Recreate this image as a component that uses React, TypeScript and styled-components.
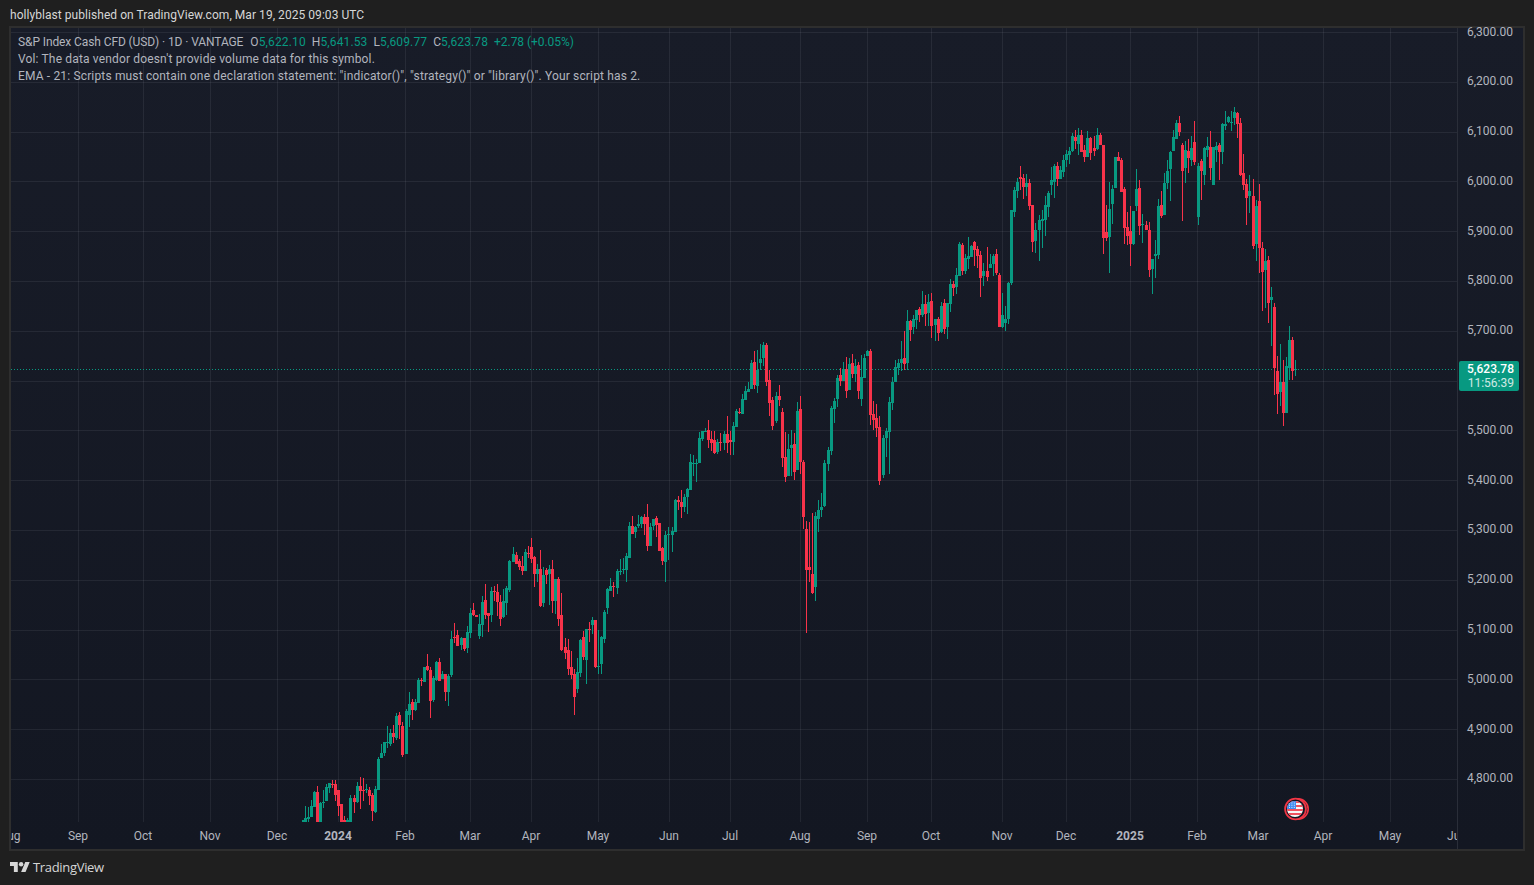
import React from "react";
import styled, { createGlobalStyle } from "styled-components";

type Bar = [number, number, number, number, number?, number?];
type Candle = { x: number; up: boolean; top: number; bottom: number; high: number; low: number };

const seg = (ox: number, oy: number, bars: Bar[]): Candle[] =>
  bars.map(([zx, k, t, b, h, l]) => ({
    x: Math.round(ox + zx / 3),
    up: k === 1,
    top: oy + t / 3,
    bottom: oy + b / 3,
    high: oy + (h ?? t) / 3,
    low: oy + (l ?? b) / 3,
  }));

const PANE_BOTTOM = 822;

const candles: Candle[] = [
  ...seg(290, 530, [
    [38,1,870,876],[46,1,865,876,828],[55,1,860,866,830,876],[64,1,828,860,810,862],[73,1,786,830,784,832],
    [82,0,786,876,768],[91,1,820,876,816],[100,1,816,818,780,834],[109,1,771,812,762,814],[118,1,760,773,760,788],
    [127,0,762,765,750,774],[136,0,763,795,750,812],[145,0,780,827,780,858],[154,0,822,876],[163,0,870,876,858],
    [172,1,870,876,865],[181,1,804,876,796],[193,0,804,815,796,850],[202,1,768,816,756,818],[211,0,768,782,741,836],
    [220,0,780,782,744,812],[229,1,778,780,763,788],[238,0,780,798,772,824],[247,0,796,843,788,872],[256,1,777,846,768,848],
    [265,1,687,779,682],[274,1,670,683,642],[283,1,637,669,637,678],[292,1,637,639,588,654],[301,1,610,642,598,648],
    [310,0,610,622,586,638],[319,1,558,624,550,630],[328,0,555,585,546,628],[337,0,588,675,576,681],[349,1,544,671,537],
    [358,1,522,554,487,590],[367,0,516,540,507,570],[376,1,516,540,507,542],[385,1,450,518,444],[394,0,450,452,445,468],
    [403,1,412,456],[412,0,408,420,372,422],[421,0,420,513,411,564],[430,1,444,510,438,516],[439,1,396,450,393,453],
    [448,0,396,453,384],[457,1,432,447,422],[466,0,432,486,432,513],[475,1,438,486,432,528],[484,1,327,435,303,441],
    [493,0,321,324,279,340],[502,0,315,348,300],[514,1,324,345,320,360],[523,0,324,357,324,362],[532,1,306,354,288,369],
    [541,1,249,309,234,324],[550,0,240,255,219,258],[559,0,255,261],[568,1,282,318,252,327],[577,1,216,285,198,321],
    [586,0,210,255,162,267],[595,0,249,258,249,306],[604,1,183,255,171,276],[613,0,183,186,168,213],[622,0,186,216,162,258],
    [631,0,216,267,195,288],[640,1,213,260,177,264],[649,1,174,219,168,255],[658,1,93,180,90,186],[670,1,72,96,51],
    [679,0,75,102,66],[688,0,93,111,87,120],[697,0,108,123,78,135],[706,1,66,123,57],[715,0,69,72,48,84],
    [724,0,51,87,24,99],[733,0,81,132,78,171],[742,1,117,132,102,156],[751,0,117,228,60,231],[760,1,135,219,111,231],
    [769,0,120,135,114,162],[778,1,117,132,105,225],[787,0,117,213,90,249],[796,1,147,213,147,252],[805,0,147,267,141,288],
    [814,0,255,360,189,363],[826,0,351,369,324,387],[835,0,360,417,327,435],[844,0,411,435,363,447],[853,0,432,501,417,555],
    [862,1,426,477,384,489],[871,1,330,429,327,441],[880,0,321,381,303,390],[889,1,297,390,297,462],[898,0,297,300,276,336],
    [907,1,270,285,261,312],[916,0,270,411,270,414],[925,1,408,411,300,432],[934,1,321,402,318,432],[943,1,246,327,240,339],
    [952,1,177,234,174,252],[961,1,168,183,144],[970,0,168,171,156,201],[982,1,123,174,117,192],
  ]),
  ...seg(600, 420, [
    [61,1,453,456,417,465],[70,1,447,450,414,462],[79,1,408,450,399,486],[88,1,318,414,306],[97,0,318,342,288],
    [106,1,321,336,318,354],[115,1,312,318,285,324],[124,1,291,312,288,324],[133,0,291,312,282,345],[142,0,291,378,252,393],
    [151,1,321,378,309],[160,1,297,318,297,330],[169,0,294,315,288,351],[178,0,309,393],[187,0,384,423,381,435],
    [196,1,345,426,333,486],[205,1,342,345,321,420],[217,1,333,345,321,396],[226,1,240,336,237],[235,0,240,246,228,270],
    [244,0,246,261,210,294],[253,1,231,261,222,276],[262,1,207,231,204,282],[271,1,126,210,102],[280,1,129,132,105,168],
    [289,1,129,131,117,186],[298,1,54,129,36],[307,1,33,57,33,63],[316,1,33,36,24],[325,0,30,60,0,84],
    [334,0,57,69,33,93],[343,0,60,99,33,102],[352,1,66,96,57,102],
  ]),
  ...seg(700, 330, [
    [61,0,336,339,309,363],[73,1,312,339,303,360],[82,0,312,339,258,369],[91,0,330,336,303,375],[100,1,288,336,276,375],
    [109,1,243,291,237],[118,0,246,249,234,252],[127,1,207,252,192],[136,1,183,210,168],[145,1,177,186,156],
    [154,1,99,177,90],[163,0,96,165,63,177],[172,1,120,168,60,189],[181,1,87,99,42,120],[190,1,45,84,36,108],
    [199,0,45,156,39,168],[208,0,150,219,120,258],[217,0,210,288,201,300],[229,1,198,273,186,279],[238,0,198,210,165,228],
    [247,0,246,384,234,411],[256,0,381,441,306,456],[265,1,357,438,312],[274,1,345,354,300,438],[283,0,342,426,309,450],
    [292,1,243,420,216],[301,0,237,396,198,432],[310,0,396,561,390,597],[319,0,597,720,573,909],[328,0,711,720,576,756],
    [337,0,732,789,549,792],[346,1,558,771,546,813],[355,1,540,567,510,606],[364,1,531,540,489,561],[373,1,399,528,390,531],
    [385,1,360,402,351,423],[394,1,234,363,228,375],[403,1,213,237,204,279],[412,1,144,207,135,231],[421,0,135,153,114,168],
    [430,1,117,153,96],[439,0,117,183,81,204],[448,1,102,180,84],[457,0,99,132,72,144],[466,1,108,132,87,156],
    [475,0,105,183,96,207],[484,1,141,207,75,228],[493,1,84,144,72],[502,1,63,78,60],[511,0,63,255,57,285],
    [520,0,252,270,213,300],[529,0,264,294,222,321],[538,0,291,453,258,465],[550,1,324,435,315,444],[559,1,303,324,294,381],
    [568,1,216,306,201,432],[577,1,156,219,141,240],[586,1,111,156,90],[595,1,99,114,87,135],[604,1,87,99,33,123],
    [613,0,84,102,3,120],[622,1,-27,99,-60,120],
  ]),
  ...seg(880, 170, [
    [91,0,453,480,450,513],[100,1,447,471,435,492],[109,1,420,450,420,477],[118,0,417,435,411,456],[127,1,402,435,363,441],
    [136,0,402,432,375,468],[145,1,396,429,372,468],[154,0,393,468,369,504],[166,1,447,465,447,513],[175,0,447,489,441,513],
    [184,1,408,486,396,489],[193,0,399,477,387,492],[202,1,399,471,399,507],[211,1,342,402,327,426],[220,0,342,354,333,378],
    [229,1,315,351,294,372],[238,1,222,318,216],[247,0,225,303,219,315],[256,1,264,303,252,312],[265,1,258,267,201,297],
    [274,1,228,261,225],[283,0,216,240,213,288],[292,0,237,258,228,294],[301,0,255,324,243,381],[310,1,303,318,279,348],
    [322,0,303,321,231,333],[331,1,282,294,252],[340,1,258,282,252,318],[349,0,252,309,237,315],[358,0,315,471,309],
    [367,1,435,471,369,474],[376,1,447,459,408,483],[385,1,339,447,336,462],[394,1,120,339,120,345],[403,1,60,126,51,141],
    [412,1,36,63,24,84],
  ]),
  ...seg(1000, 100, [
    [61,0,231,237,198,270],[70,0,234,261,222,297],[79,1,249,261,222,288],[88,0,249,318,237,330],[97,0,315,426,315,456],
    [106,1,390,423,369,459],[118,1,360,390,345,483],[127,1,357,362,330,444],[136,1,315,360,288,408],[145,1,279,321,273,351],
    [154,1,240,255,201,285],[163,1,198,246,192,294],[172,0,198,237,186,258],[181,1,210,237,198,231],[190,1,180,216,165,231],
    [199,1,162,180,150,201],[208,1,153,165,141,192],[217,1,108,153,99,156],[226,0,111,123,90,147],[235,1,105,132,84,165],
    [244,0,105,156,90],[253,0,150,171,135,186],[262,1,114,171,93,171],[271,0,114,159,111,180],[283,0,144,153,108,168],
    [292,1,105,147,84,150],[301,0,105,135,99],[310,0,135,414,135,462],[319,0,396,414,315,423],[328,1,327,411,246,519],
    [337,1,267,312,255,372],[346,1,171,264,171],[355,0,171,183,156],[364,0,180,276,174],[373,0,267,384,261,432],
    [382,0,381,408,336,435],[391,0,393,432,318,498],[400,1,333,432,333,434],[409,1,267,318,207,333],[418,0,264,378,240,405],
    [427,1,372,375,342,429],[438,0,375,390,363],[447,0,390,510,366,531],[456,1,477,507,477,582],[465,1,462,468,420,534],
    [474,1,318,465,297,477],[483,0,315,348,273,354],[492,1,249,345,219],[501,1,213,249,180,267],[510,1,156,207,153,303],
    [519,1,111,153,90],[528,1,69,117,60],[537,0,69,96,48,108],[547,0,135,213,129,363],[556,1,150,204,123,249],
    [565,0,153,174,117,219],[574,1,144,180,108,198],[583,0,126,186,63,195],[595,1,198,351,189,375],[604,0,183,213,177,300],
    [613,1,144,225,141,255],[622,1,138,150,111,171],[631,0,141,204,93,240],[640,1,141,255],[649,1,138,150,126,186],
    [658,0,135,156,129,240],[667,1,72,156,69,192],[676,1,72,78,33,90],[685,1,51,66,48,69],[694,1,66,68,33,93],
    [703,1,36,54,21,75],[712,0,39,72,36,114],[721,0,69,225,54,228],[730,0,219,255,162,270],[739,0,252,294,237,375],
    [748,1,273,288,225,339],
  ]),
  ...seg(1230, 100, [
    [70,0,288,438,237,447],[79,1,318,432,300,483],[88,0,303,444,252,519],[97,0,444,516,426,633],[106,1,483,510,447,624],
    [115,0,480,609,468,669],[124,1,591,600,561,738],[133,0,621,804,609,885],[142,0,813,882,768,942],[151,1,846,876,732,918],
    [160,0,846,939,780,978],[169,1,798,939,771],[178,1,720,804,678,840],[187,0,720,813,711,840],[196,1,807,809,780,828],
  ]),
];

const GlobalStyle = createGlobalStyle`
  html, body { margin: 0; padding: 0; background: #1f1f1f; }
  body { font-family: "Roboto", "Liberation Sans", sans-serif; overflow: hidden; }
`;

const Page = styled.div`
  width: 1534px;
  height: 885px;
  display: flex;
  flex-direction: column;
  background: #1f1f1f;
`;

const Header = styled.header`
  height: 26px;
  flex: none;
  padding: 3px 0 0 10px;
  box-sizing: border-box;
  display: flex;
  align-items: center;
  font-size: 12px;
  letter-spacing: 0.05px;
  color: #d6d6d6;
`;

const ChartFrame = styled.section`
  width: 1516px;
  height: 825px;
  flex: none;
  margin-left: 9px;
  box-sizing: border-box;
  border: 2px solid #2e2e2e;
  display: grid;
  grid-template-columns: 1446px 1fr;
  grid-template-rows: 794px 1fr;
  background: linear-gradient(180deg, #181c28 0%, #131722 100%);
`;

const Pane = styled.div`
  position: relative;
  overflow: hidden;
`;

const ChartSvg = styled.svg`
  display: block;
  width: 1446px;
  height: 794px;
`;

const Legend = styled.div`
  position: absolute;
  left: 7px;
  top: 6px;
  display: flex;
  flex-direction: column;
  font-size: 12px;
  line-height: 17px;
  letter-spacing: 0.155px;
  color: #b2b5be;
  white-space: pre;
`;

const LegendRow = styled.div`
  display: flex;
`;

const LegendTitle = styled.span`
  margin-right: 7px;
  letter-spacing: -0.1px;
`;

const Ohlc = styled.span`
  margin-right: 6px;
  letter-spacing: 0.13px;
`;

const Value = styled.span`
  color: #089981;
`;

const Change = styled(Value)`
  letter-spacing: -0.05px;
`;

const PriceAxis = styled.div`
  grid-row: 1 / span 2;
  grid-column: 2;
  border-left: 1px solid #2a2e39;
  box-sizing: border-box;
  position: relative;
  display: flex;
  flex-direction: column;
  font-size: 12px;
  color: #b2b5be;
`;

const PriceRow = styled.div`
  height: 49.8px;
  flex: none;
  display: flex;
  align-items: center;
  justify-content: flex-end;
  padding-right: 10px;
  &:first-child { margin-top: -21.4px; }
`;

const PriceTag = styled.div`
  position: absolute;
  left: 1px;
  top: 333px;
  width: 60px;
  height: 30px;
  box-sizing: border-box;
  padding-right: 5px;
  border-radius: 2px;
  background: #089981;
  display: flex;
  flex-direction: column;
  align-items: flex-end;
  justify-content: center;
  font-size: 12px;
  line-height: 14px;
`;

const TagPrice = styled.span`
  color: #ffffff;
  font-weight: 500;
`;

const TagTimer = styled.span`
  color: #ffffff;
  opacity: 0.8;
`;

const TimeAxis = styled.div`
  display: flex;
  overflow: hidden;
  align-items: center;
  font-size: 12px;
  color: #b2b5be;
`;

const TimeCell = styled.div`
  flex: none;
  height: 100%;
  display: flex;
  align-items: center;
`;

const TimeLabel = styled.span<{ $major?: boolean }>`
  transform: translateX(-50%);
  white-space: nowrap;
  font-weight: ${(p) => (p.$major ? 700 : 400)};
`;

const Footer = styled.footer`
  flex: 1;
  display: flex;
  align-items: center;
  gap: 3px;
  padding: 0 0 2px 10px;
  color: #d6d6d6;
  font-family: "Open Sans", sans-serif;
  font-size: 13px;
  letter-spacing: -0.32px;
`;

const LogoSvg = styled.svg`
  width: 20px;
  height: 10px;
  display: block;
`;

const priceY = (p: number) => 32 + (6300 - p) * 0.498;
const priceLevels = Array.from({ length: 16 }, (_, i) => 6300 - i * 100);
const HIDDEN_BY_TAG = 5600;
const ticks: { label: string; x: number; major?: boolean; grid: boolean }[] = [
  { label: "Aug", x: 10, grid: false },
  { label: "Sep", x: 78, grid: true },
  { label: "Oct", x: 143, grid: true },
  { label: "Nov", x: 210, grid: true },
  { label: "Dec", x: 277, grid: true },
  { label: "2024", x: 338, major: true, grid: true },
  { label: "Feb", x: 405, grid: true },
  { label: "Mar", x: 470, grid: true },
  { label: "Apr", x: 531, grid: true },
  { label: "May", x: 598, grid: true },
  { label: "Jun", x: 669, grid: true },
  { label: "Jul", x: 730, grid: true },
  { label: "Aug", x: 800, grid: true },
  { label: "Sep", x: 867, grid: true },
  { label: "Oct", x: 931, grid: true },
  { label: "Nov", x: 1002, grid: true },
  { label: "Dec", x: 1066, grid: true },
  { label: "2025", x: 1130, major: true, grid: true },
  { label: "Feb", x: 1197, grid: true },
  { label: "Mar", x: 1258, grid: true },
  { label: "Apr", x: 1323, grid: true },
  { label: "May", x: 1390, grid: true },
  { label: "Jun", x: 1457, grid: true },
];

const FlagMarker = () => (
  <g>
    <defs>
      <clipPath id="flagClip">
        <circle cx="1295" cy="809" r="8" />
      </clipPath>
    </defs>
    <circle cx="1298" cy="809" r="10.2" fill="none" stroke="#f23645" strokeWidth="1.6" />
    <circle cx="1295.5" cy="809" r="10.4" fill="#131722" stroke="#f23645" strokeWidth="1.8" />
    <g clipPath="url(#flagClip)">
      <rect x="1287" y="801" width="16" height="16" fill="#f7f7f7" />
      {[801, 805, 809, 813].map((y) => (
        <rect key={y} x="1287" y={y} width="16" height="2" fill="#f0525f" />
      ))}
      <rect x="1287" y="801" width="9" height="8" fill="#3f8cf0" />
      {[0, 1, 2].map((r) =>
        [0, 1, 2].map((c) => (
          <rect key={`${r}-${c}`} x={1289 + c * 2.4} y={802.5 + r * 2.2} width="1" height="1" fill="#e8f0ff" />
        ))
      )}
    </g>
  </g>
);

const TradingViewLogo = () => (
  <LogoSvg viewBox="0 4 36 18" preserveAspectRatio="none" aria-hidden="true">
    <path fill="#d6d6d6" d="M14 22H7V11H0V4h14v18zM28 22h-8l7.5-18h8L28 22z" />
    <circle fill="#d6d6d6" cx="20" cy="8" r="4" />
  </LogoSvg>
);

export default function App() {
  return (
    <Page>
      <GlobalStyle />
      <Header>hollyblast published on TradingView.com, Mar 19, 2025 09:03 UTC</Header>
      <ChartFrame>
        <Pane>
          <ChartSvg viewBox="11 28 1446 794" shapeRendering="crispEdges">
            {priceLevels.map((p) => (
              <line key={p} x1="11" x2="1457" y1={Math.round(priceY(p)) + 0.5} y2={Math.round(priceY(p)) + 0.5} stroke="#f0f3fa" strokeOpacity="0.07" />
            ))}
            {ticks.filter((t) => t.grid).map((t) => (
              <line key={t.x} x1={t.x + 0.5} x2={t.x + 0.5} y1="28" y2={PANE_BOTTOM} stroke="#f0f3fa" strokeOpacity="0.07" />
            ))}
            <line x1="11" x2="1457" y1="369.5" y2="369.5" stroke="#089981" strokeDasharray="1 2" />
            {candles.map((c) => {
              const color = c.up ? "#089981" : "#f7334a";
              const top = Math.round(c.top);
              const h = Math.max(1, Math.round(c.bottom) - top);
              return (
                <g key={c.x} fill={color}>
                  <rect x={c.x} y={Math.round(c.high)} width="1" height={Math.max(1, Math.round(c.low) - Math.round(c.high))} />
                  <rect x={c.x - 1} y={top} width="3" height={h} />
                </g>
              );
            })}
            <g shapeRendering="auto">
              <FlagMarker />
            </g>
          </ChartSvg>
          <Legend>
            <LegendRow>
              <LegendTitle>S&amp;P Index Cash CFD (USD) · 1D · VANTAGE</LegendTitle>
              <Ohlc>O<Value>5,622.10</Value></Ohlc>
              <Ohlc>H<Value>5,641.53</Value></Ohlc>
              <Ohlc>L<Value>5,609.77</Value></Ohlc>
              <Ohlc>C<Value>5,623.78</Value></Ohlc>
              <Change>+2.78 (+0.05%)</Change>
            </LegendRow>
            <LegendRow>Vol: The data vendor doesn't provide volume data for this symbol.</LegendRow>
            <LegendRow>EMA - 21: Scripts must contain one declaration statement: "indicator()", "strategy()" or "library()". Your script has 2.</LegendRow>
          </Legend>
        </Pane>
        <PriceAxis>
          {priceLevels.map((p) => (
            <PriceRow key={p}>{p === HIDDEN_BY_TAG ? "" : `${p.toLocaleString("en-US")}.00`}</PriceRow>
          ))}
          <PriceTag>
            <TagPrice>5,623.78</TagPrice>
            <TagTimer>11:56:39</TagTimer>
          </PriceTag>
        </PriceAxis>
        <TimeAxis>
          {ticks.map((t, i) => {
            const start = i === 0 ? 11 : t.x;
            const next = ticks[i + 1]?.x ?? 1500;
            return (
              <TimeCell key={`${t.label}-${t.x}`} style={{ width: next - start }}>
                <TimeLabel $major={t.major} style={i === 0 ? { marginLeft: t.x - start } : undefined}>{t.label}</TimeLabel>
              </TimeCell>
            );
          })}
        </TimeAxis>
      </ChartFrame>
      <Footer>
        <TradingViewLogo />
        TradingView
      </Footer>
    </Page>
  );
}
